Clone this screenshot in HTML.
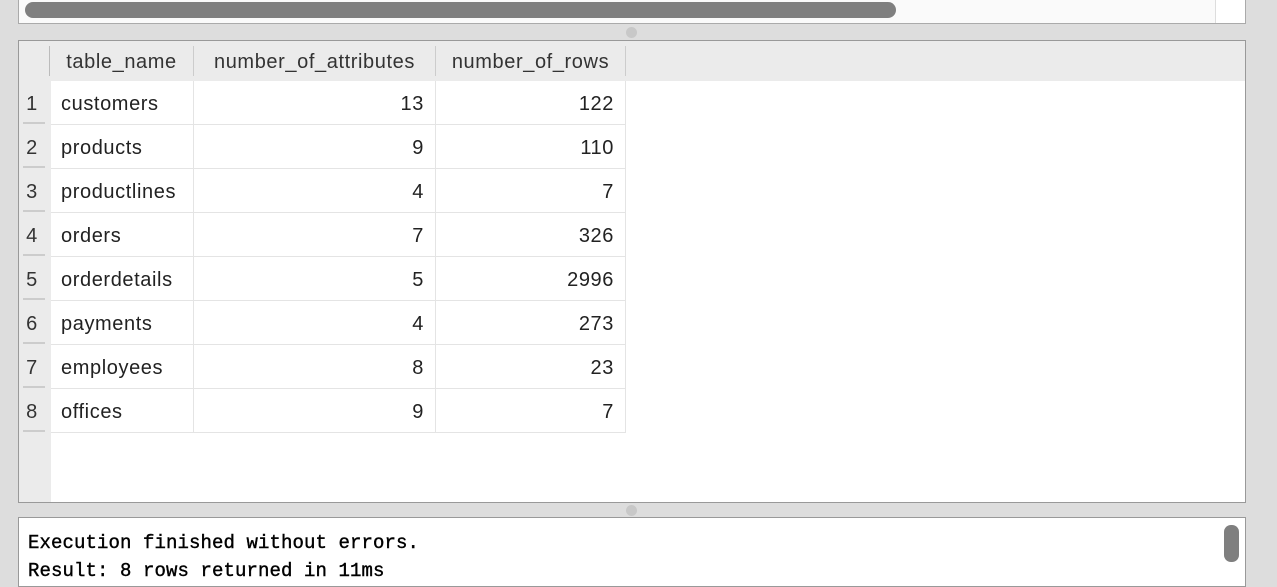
<!DOCTYPE html>
<html><head><style>
*{margin:0;padding:0;box-sizing:border-box}
body{width:1277px;height:582px;background:#dddddd;position:relative;overflow:hidden;font-family:"Liberation Sans",sans-serif;color:#222}
.a{position:absolute}
.t{font-size:20px;letter-spacing:0.6px;line-height:44px;position:absolute;white-space:nowrap}
.r{text-align:right}
.h{font-size:20px;letter-spacing:0.6px;line-height:42px;position:absolute;text-align:center;color:#333;white-space:nowrap}
</style></head><body>
<div class="a" style="left:18px;top:-2px;width:1228px;height:26px;background:#fafafa;border:1px solid #aaa;"></div>
<div class="a" style="left:1215px;top:0;width:30px;height:23px;background:#fff;border-left:1px solid #ddd"></div>
<div class="a" style="left:25px;top:2px;width:871px;height:16px;background:#7f7f7f;border-radius:8px"></div>
<div class="a" style="left:626px;top:27px;width:11px;height:11px;border-radius:50%;background:#c8c8c8"></div>
<div class="a" style="left:18px;top:40px;width:1228px;height:463px;background:#fff;border:1px solid #999;"></div>
<div class="a" style="left:19px;top:41px;width:1226px;height:40px;background:#ebebeb"></div>
<div class="a" style="left:19px;top:41px;width:32px;height:461px;background:#ebebeb"></div>
<div class="a" style="left:49px;top:46px;width:1px;height:30px;background:#bbb"></div>
<div class="a" style="left:193px;top:46px;width:1px;height:30px;background:#ccc"></div>
<div class="a" style="left:435px;top:46px;width:1px;height:30px;background:#ccc"></div>
<div class="a" style="left:625px;top:46px;width:1px;height:30px;background:#ccc"></div>
<div class="h" style="left:50px;top:41px;width:143px">table_name</div>
<div class="h" style="left:194px;top:41px;width:241px">number_of_attributes</div>
<div class="h" style="left:436px;top:41px;width:189px">number_of_rows</div>
<div id="rows"></div>
<div class="a" style="left:626px;top:505px;width:11px;height:11px;border-radius:50%;background:#c8c8c8"></div>
<div class="a" style="left:18px;top:517px;width:1228px;height:70px;background:#fff;border:1px solid #999;"></div>
<div class="a" style="left:1224px;top:525px;width:15px;height:37px;background:#7f7f7f;border-radius:7px"></div>
<div class="a" style="left:28px;top:529px;font-family:'Liberation Mono',monospace;font-size:19px;line-height:28px;color:#000;letter-spacing:0.1px;-webkit-text-stroke:0.4px #000">Execution finished without errors.<br>Result: 8 rows returned in 11ms</div>
<script>
var d=[["customers",13,122],["products",9,110],["productlines",4,7],["orders",7,326],["orderdetails",5,2996],["payments",4,273],["employees",8,23],["offices",9,7]];
var h="";
d.forEach(function(r,i){var y=81+i*44;
h+='<div class="t" style="left:19px;top:'+(y+1)+'px;width:26px;text-align:center;color:#333">'+(i+1)+'</div>';
h+='<div class="a" style="left:23px;top:'+(y+41)+'px;width:22px;height:2px;background:#ccc"></div>';
h+='<div class="t" style="left:61px;top:'+(y+1)+'px">'+r[0]+'</div>';
h+='<div class="t r" style="left:194px;top:'+(y+1)+'px;width:230px">'+r[1]+'</div>';
h+='<div class="t r" style="left:436px;top:'+(y+1)+'px;width:178px">'+r[2]+'</div>';
h+='<div class="a" style="left:51px;top:'+(y+43)+'px;width:575px;height:1px;background:#e4e4e4"></div>';
});
h+='<div class="a" style="left:193px;top:81px;width:1px;height:352px;background:#e4e4e4"></div>';
h+='<div class="a" style="left:435px;top:81px;width:1px;height:352px;background:#e4e4e4"></div>';
h+='<div class="a" style="left:625px;top:81px;width:1px;height:352px;background:#e4e4e4"></div>';
document.getElementById("rows").innerHTML=h;
</script>
</body></html>
